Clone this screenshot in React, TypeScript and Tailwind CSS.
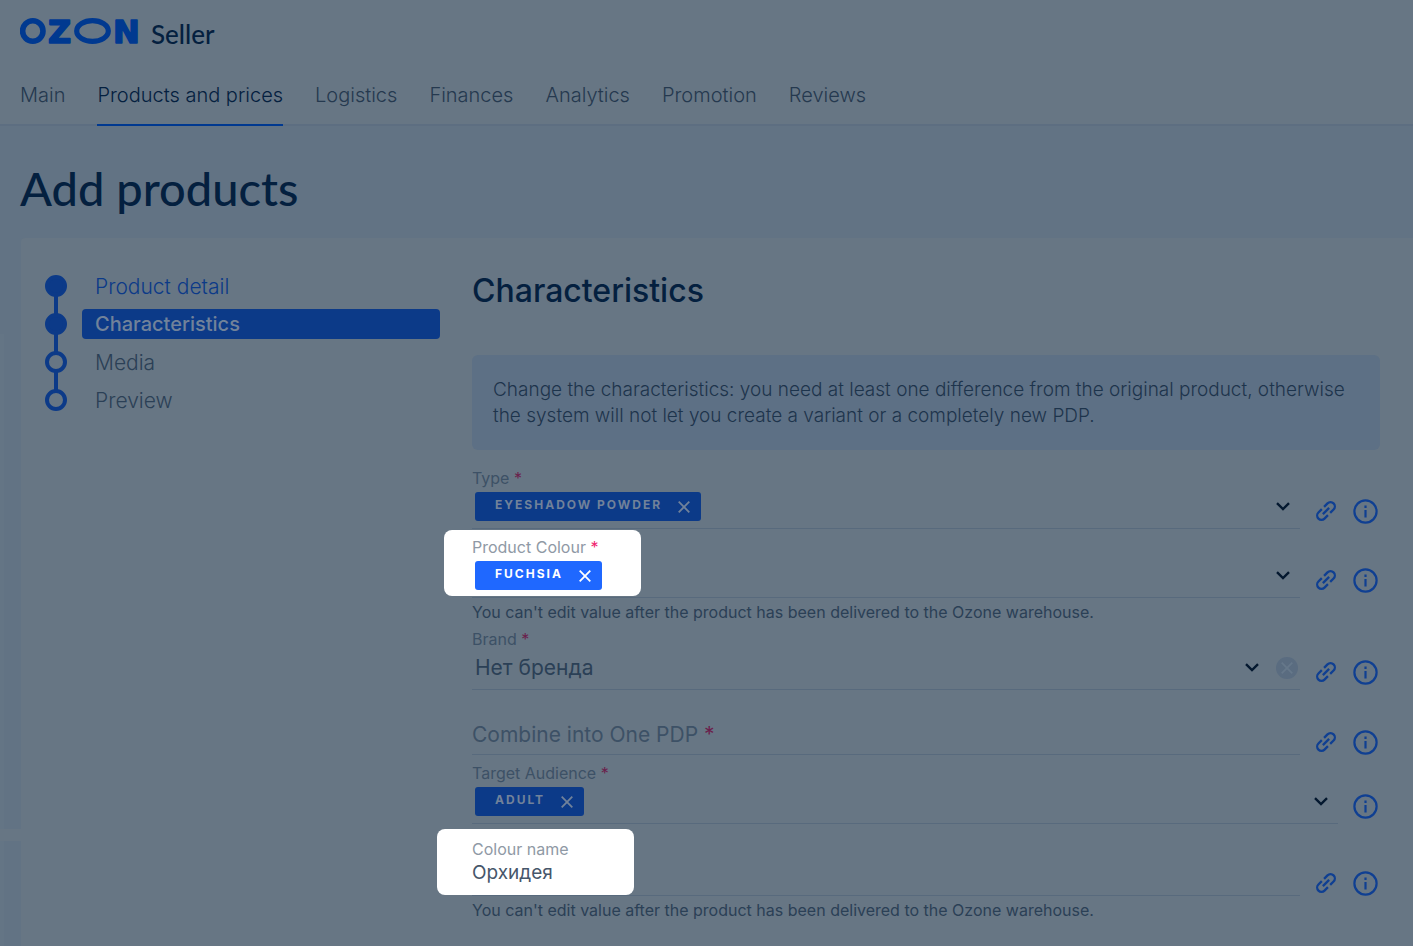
import { ReactNode } from "react";
import clsx from "clsx";

const NAV = ["Main", "Products and prices", "Logistics", "Finances", "Analytics", "Promotion", "Reviews"];

const STEPS = [
  { name: "Product detail", done: true },
  { name: "Characteristics", done: true, current: true },
  { name: "Media", done: false },
  { name: "Preview", done: false },
];

const HINT = "You can't edit value after the product has been delivered to the Ozone warehouse.";

//--------------------ICONS---------------------------------------------------------

function OzonLogo() {
  return (
    <svg width="122" height="44" viewBox="0 -8 122 44" role="img" aria-label="OZON" className="text-[#003990]">
      <ellipse cx="12.8" cy="14" rx="10.2" ry="10.2" fill="none" stroke="currentColor" strokeWidth="5.6" />
      <ellipse cx="72.5" cy="14" rx="15.8" ry="10.4" fill="none" stroke="currentColor" strokeWidth="5.2" />
      <g
        fill="currentColor"
        stroke="currentColor"
        strokeWidth="1.6"
        strokeLinejoin="round"
        fontFamily="DejaVu Sans"
        fontWeight="700"
        fontSize="32"
      >
        <text x="28" y="26">Z</text>
        <text x="93" y="26">N</text>
      </g>
    </svg>
  );
}

function ChevronIcon() {
  return (
    <svg width="14" height="9" viewBox="0 0 14 9" fill="none" stroke="#04182f" strokeWidth="2.4">
      <path d="M1 1.2 L7 7 L13 1.2" />
    </svg>
  );
}

function CrossIcon() {
  return (
    <svg width="12" height="12" viewBox="0 0 12 12" fill="none" stroke="currentColor" strokeWidth="1.8">
      <path d="M0.7 0.7 L11.3 11.3 M11.3 0.7 L0.7 11.3" />
    </svg>
  );
}

function LinkIcon() {
  return (
    <svg width="24" height="24" viewBox="0 0 24 24" fill="none" stroke="#0f3f92" strokeWidth="2.3">
      <g transform="rotate(-45 12 12)">
        <path d="M10.4 7.7 H5.6 A4.3 4.3 0 0 0 5.6 16.3 H10.4" />
        <path d="M13.6 7.7 H18.4 A4.3 4.3 0 0 1 18.4 16.3 H13.6" />
        <path d="M7.6 12 H16.4" />
      </g>
    </svg>
  );
}

function InfoIcon() {
  return (
    <svg width="25" height="25" viewBox="0 0 25 25" fill="none" stroke="#0f3f92" strokeWidth="2.2">
      <circle cx="12.5" cy="12.5" r="11.1" />
      <path d="M12.5 11 V18.5 M12.5 6.6 V9" />
    </svg>
  );
}

//--------------------FIELD PARTS---------------------------------------------------------

function Spotlight() {
  return <div className="absolute -left-7 h-[66px] w-[197px] rounded-lg bg-white" />;
}

function Star() {
  return <span className="text-[#6b1f4c]">*</span>;
}

function Row({ children, link = true, low = false }: { children: ReactNode; link?: boolean; low?: boolean }) {
  return (
    <div className="flex items-end pr-[2px]">
      <div className="relative min-w-0 flex-1">{children}</div>
      {link && (
        <button type="button" aria-label="Copy link" className={clsx("ml-[14px] shrink-0", low ? "mb-px" : "mb-[6px]")}>
          <LinkIcon />
        </button>
      )}
      <button type="button" aria-label="Info" className={clsx("ml-[15px] shrink-0", !low && "mb-[5px]")}>
        <InfoIcon />
      </button>
    </div>
  );
}

function ChipField({ label, value, lit = false }: { label: string; value: string; lit?: boolean }) {
  return (
    <div className="relative border-b border-[#586a7d]">
      {lit && (
        <div className="absolute -top-[6px] left-0">
          <Spotlight />
        </div>
      )}
      <div className={clsx("relative text-base leading-[22px]", lit ? "text-[#8f99a5]" : "text-[#3d5166]")}>
        {label} {lit ? <span className="text-[#f0246e]">*</span> : <Star />}
      </div>
      <div className="relative flex items-center justify-between pt-[3px] pr-[10px] pb-[7px] pl-[3px]">
        <span
          className={clsx(
            "flex h-[29px] items-center gap-4 rounded-[3px] pr-[11px] pl-5",
            lit ? "bg-[#1f68ff] text-white" : "bg-[#0c3a88] text-[#71829a]"
          )}
        >
          <span className="pb-[3px] text-xs leading-4 font-bold tracking-[2px]">{value}</span>
          <button type="button" aria-label={"Remove " + value}>
            <CrossIcon />
          </button>
        </span>
        <button type="button" aria-label={"Open " + label}>
          <ChevronIcon />
        </button>
      </div>
    </div>
  );
}

//--------------------PAGE---------------------------------------------------------

export default function App() {
  return (
    <div className="flex min-h-screen flex-col bg-[#627384] font-['Inter',sans-serif] text-[#2b4056]">
      <header className="border-b-2 border-[#5d6e81] bg-[#677684] px-5">
        <div className="flex h-16 items-start gap-[9px] pt-[9px]">
          <OzonLogo />
          <span className="pt-2 font-['Lato',sans-serif] text-[26px] leading-[34px] font-medium text-[#04203f]">
            Seller
          </span>
        </div>
        <nav className="-mb-[2px] flex h-[62px] gap-8 text-[20px] font-light">
          {NAV.map((item) => (
            <a
              key={item}
              href="#"
              className={clsx(
                "flex items-center border-b-2 pt-px whitespace-nowrap",
                item === "Products and prices" ? "border-[#003990] text-[#04203f]" : "border-transparent text-[#25394f]"
              )}
            >
              {item}
            </a>
          ))}
        </nav>
      </header>

      <h1 className="px-5 pt-8 pb-5 font-['Lato',sans-serif] text-[47px] leading-[60px] font-medium text-[#04203f]">
        Add products
      </h1>

      <div className="flex flex-1">
        {/* page gutter with the edge of the side panel */}
        <div className="flex w-[21px] shrink-0 flex-col">
          <div className="mt-24 h-[495px] border-l-4 border-[#647585]" />
          <div className="h-3 bg-[#677684]" />
          <div className="flex-1 border-l-4 border-[#647585]" />
        </div>

        <main className="flex min-w-0 flex-1 gap-8 rounded-tl bg-[#677684] pt-[33px] pr-[33px] pb-6 pl-6">
          <ol className="flex w-[395px] shrink-0 flex-col gap-2">
            {STEPS.map((step, i) => (
              <li key={step.name} className="relative flex h-[30px] items-center gap-[15px]">
                {i < STEPS.length - 1 && (
                  <span className="absolute top-[25px] left-[9px] h-[18px] w-1 bg-[#0c3a88]" />
                )}
                <span
                  className={clsx(
                    "size-[22px] shrink-0 rounded-full border-4 border-[#0c3a88]",
                    step.done && "bg-[#0c3a88]"
                  )}
                />
                <a
                  href="#"
                  className={clsx(
                    "flex h-[30px] flex-1 items-center rounded pl-[13px]",
                    step.current ? "bg-[#0c3a88] text-[20px] font-medium text-[#71829a]" : "pt-px text-[21px] font-light",
                    step.done && !step.current && "text-[#0c3a88]"
                  )}
                >
                  {step.name}
                </a>
              </li>
            ))}
          </ol>

          <section className="min-w-0 flex-1">
            <h2 className="text-[32px] leading-10 font-medium text-[#04203f]">Characteristics</h2>
            <p className="mt-11 rounded-md bg-[#5d7085] pt-[22px] pr-5 pb-[21px] pl-[21px] text-[19px] leading-[26px] font-light text-[#1d344c]">
              Change the characteristics: you need at least one difference from the original product, otherwise the
              system will not let you create a variant or a completely new PDP.
            </p>

            <div className="mt-[17px] flex flex-col">
              <Row>
                <ChipField label="Type" value="EYESHADOW POWDER" />
              </Row>
              <div className="mt-[7px]">
                <Row>
                  <ChipField label="Product Colour" value="FUCHSIA" lit />
                </Row>
              </div>
              <p className="mt-[3px] text-base leading-[22px]">{HINT}</p>

              <div className="mt-[5px]">
                <Row>
                  <div className="border-b border-[#586a7d]">
                    <label htmlFor="brand" className="block text-base leading-[22px] text-[#3d5166]">
                      Brand <Star />
                    </label>
                    <div className="relative flex items-center pt-[3px] pr-[2px] pb-[7px] pl-[3px]">
                      <select
                        id="brand"
                        className="h-[29px] min-w-0 flex-1 appearance-none bg-transparent text-[21px] leading-[29px] outline-none"
                      >
                        <option>Нет бренда</option>
                      </select>
                      <ChevronIcon />
                      <button
                        type="button"
                        aria-label="Clear brand"
                        className="ml-[17px] flex size-[22px] items-center justify-center rounded-full bg-[#5a6c80] text-[#66788a]"
                      >
                        <CrossIcon />
                      </button>
                    </div>
                  </div>
                </Row>
              </div>

              <div className="mt-[3px]">
                <Row low>
                  <div className="flex items-center border-b border-[#586a7d] pt-[27px] pb-1 text-[21px] leading-[30px]">
                    <label htmlFor="pdp" className="text-[#3d5166]">
                      Combine into One PDP <Star />
                    </label>
                    <input id="pdp" type="text" className="h-[30px] min-w-0 flex-1 bg-transparent outline-none" />
                  </div>
                </Row>
              </div>

              <div className="mt-[7px]">
                <Row link={false}>
                  <ChipField label="Target Audience" value="ADULT" />
                </Row>
              </div>

              <div className="mt-[14px]">
                <Row low>
                  <div className="relative border-b border-[#586a7d]">
                    <div className="absolute -top-[9px] -left-[7px]">
                      <Spotlight />
                    </div>
                    <label htmlFor="colour-name" className="relative block text-base leading-[22px] text-[#8f99a5]">
                      Colour name
                    </label>
                    <input
                      id="colour-name"
                      type="text"
                      defaultValue="Орхидея"
                      className="relative mb-2 block h-[27px] w-[150px] bg-transparent text-[19px] text-[#46566a] outline-none"
                    />
                  </div>
                </Row>
              </div>
              <p className="mt-[3px] text-base leading-[22px]">{HINT}</p>
            </div>
          </section>
        </main>
      </div>
    </div>
  );
}
